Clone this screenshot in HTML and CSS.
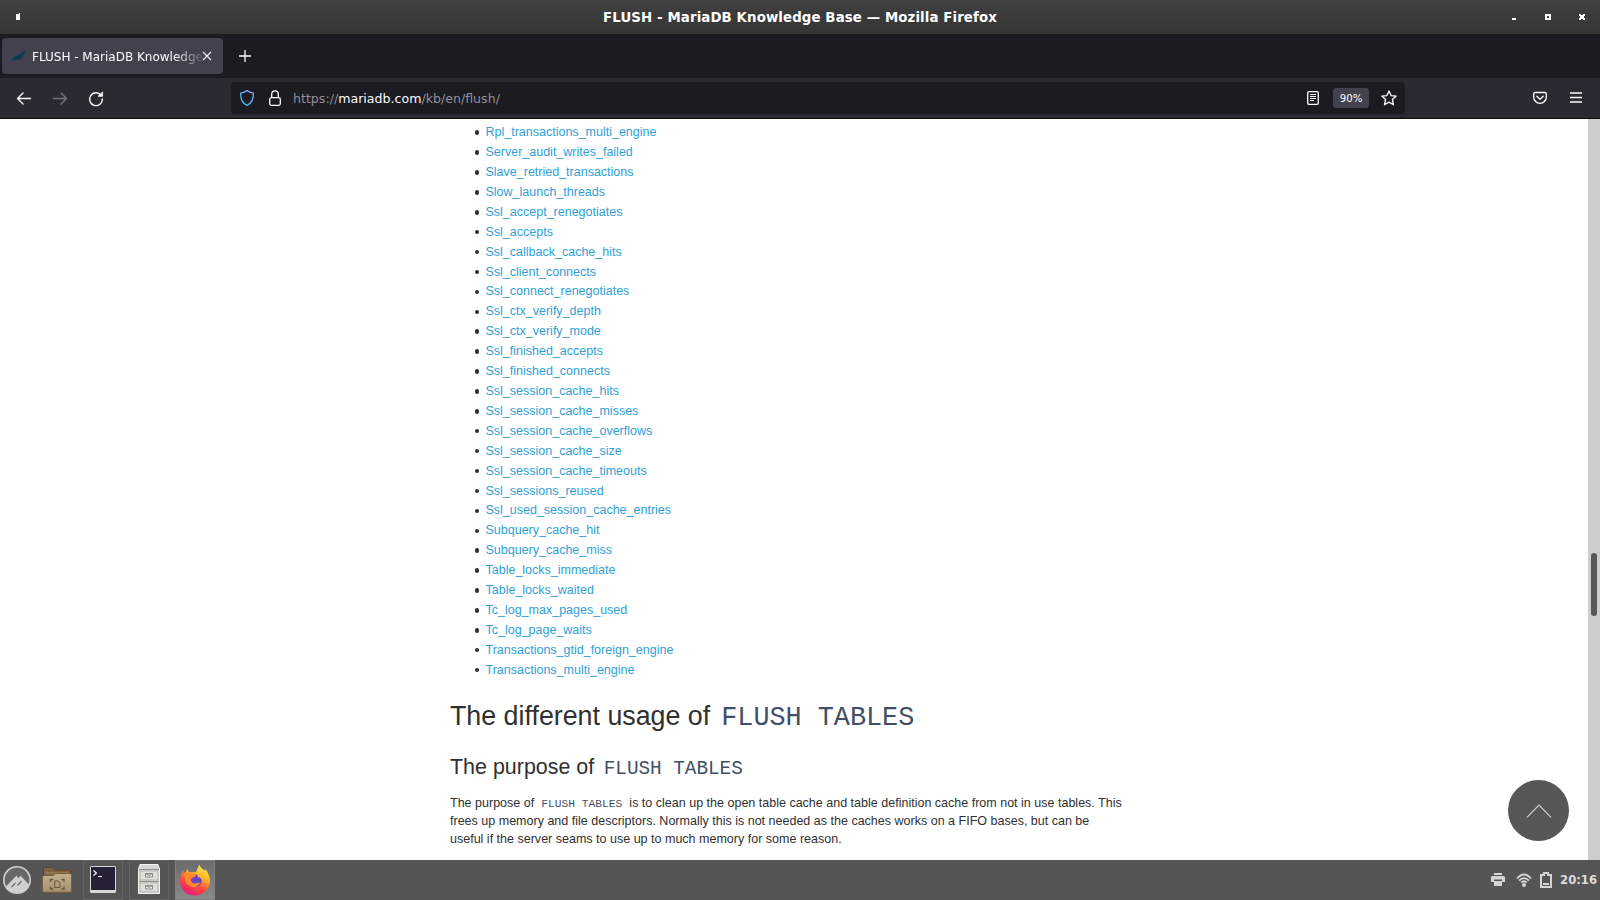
FILE: index.html
```html
<!DOCTYPE html>
<html lang="en">
<head>
<meta charset="utf-8">
<title>FLUSH - MariaDB Knowledge Base</title>
<link rel="stylesheet" href="styles.css">
</head>
<body>
<div class="screen">
  <header class="titlebar">
    <svg class="pin" width="4" height="7"><path d="M0 1H3V0H4V7H0Z" fill="#fff"/></svg>
    <div class="title">FLUSH - MariaDB Knowledge Base — Mozilla Firefox</div>
    <svg class="winbtns" width="74" height="8" fill="#fff" shape-rendering="crispEdges">
      <rect x="0" y="5" width="4" height="2"/>
      <path fill-rule="evenodd" d="M33 1h6v6h-6zM35 3v2h2v-2z"/>
      <path d="M67 1h2v1h2V1h2v2h-1v2h1v2h-2V6h-2v1h-2V5h1V3h-1z"/>
    </svg>
  </header>
  <div class="tabs">
    <div class="tab">
      <svg class="favicon" width="16" height="16" viewBox="0 0 16 16"><path d="M.3 12.300C2 12 2.600 11 4 9.500 5.500 8 7.500 7.500 9.500 6.800 12 5.500 12 3.300 15.600 2.500 15.500 4 14 4.500 13.600 6.500 13 9 11.500 10 9.800 10.800L10.700 12.500 8.300 11.300C6 11.500 5.500 12.800 4 13L4.300 11.600C3 12.500 1.500 12.800.3 12.300Z" fill="#053a52"/></svg>
      <span class="tab-label">FLUSH - MariaDB Knowledge</span>
      <svg class="tab-close" width="10" height="10"><path d="M1 1L9 9M9 1L1 9" stroke="#f1f1f4" stroke-width="1.100"/></svg>
    </div>
    <svg class="plus" width="12" height="12"><path d="M6 0V12M0 6H12" stroke="#fbfbfe" stroke-width="1.300"/></svg>
  </div>
  <nav class="toolbar">
    <svg class="nav-icons" width="110" height="40" fill="none" stroke="#fbfbfe" stroke-width="1.400" stroke-linecap="round" stroke-linejoin="round">
      <path d="M30.500 20.500H17.500M23 15L17.500 20.500L23 26"/>
      <path stroke="#75747c" d="M53.500 20.500H66.500M61 15L66.500 20.500L61 26"/>
      <path d="M101 17.200A6.400 6.400 0 1 0 102.400 21"/>
      <path fill="#fbfbfe" stroke-width=".8" d="M102.600 14.300V18.300H98.400Z"/>
    </svg>
    <div class="urlbar">
      <svg class="shield" width="16" height="18" viewBox="0 0 16 18"><defs><linearGradient id="g" x1="0" y1="1" x2="1" y2="0"><stop offset=".2" stop-color="#2cc5f8"/><stop offset="1" stop-color="#b79bf5"/></linearGradient></defs><path d="M8 1.600C6.500 2.900 4.200 3.800 1.700 4.200C1.300 9.500 3 13.900 8 16.400C13 13.900 14.700 9.500 14.300 4.200C11.800 3.800 9.500 2.900 8 1.600Z" fill="none" stroke="url(#g)" stroke-width="1.300"/></svg>
      <svg class="lock" width="12" height="16" fill="none" stroke="#fbfbfe" stroke-width="1.300"><path d="M2.700 8V4.200a3.300 3.300 0 0 1 6.600 0V8"/><rect x=".7" y="7.700" width="10.600" height="7.600" rx="1.500"/></svg>
      <span class="url">https://<b>mariadb.com</b>/kb/en/flush/</span>
      <svg class="reader" width="12" height="14" fill="none" stroke="#fbfbfe"><rect x=".7" y=".7" width="10.600" height="12.600" rx="1.300" stroke-width="1.300"/><path d="M3 3.500H9M3 5.500H9M3 7.500H9M3 9.500H7"/></svg>
      <span class="zoom">90%</span>
      <svg class="star" width="16" height="16" viewBox="0 0 16 16"><path d="M8 1L10.100 5.600L15.200 6.100L11.400 9.500L12.500 14.800L8 12.100L3.500 14.800L4.600 9.500L.8 6.100L5.900 5.600Z" fill="none" stroke="#fbfbfe" stroke-width="1.300" stroke-linejoin="round"/></svg>
    </div>
    <svg class="menu-icons" width="50" height="14" fill="none" stroke="#fbfbfe" stroke-width="1.300"><path d="M2 1.500H12A1.300 1.300 0 0 1 13.300 2.800V6A6.300 6.300 0 0 1 .7 6V2.800A1.300 1.300 0 0 1 2 1.500ZM3.800 5.200L7 8.200L10.200 5.200" stroke-linejoin="round" stroke-linecap="round"/><path d="M37 2H49M37 6.500H49M37 11H49" stroke-width="1.300"/></svg>
  </nav>
  <main class="page">
    <article class="content">
      <ul class="vars">
        <li><a>Rpl_transactions_multi_engine</a></li>
        <li><a>Server_audit_writes_failed</a></li>
        <li><a>Slave_retried_transactions</a></li>
        <li><a>Slow_launch_threads</a></li>
        <li><a>Ssl_accept_renegotiates</a></li>
        <li><a>Ssl_accepts</a></li>
        <li><a>Ssl_callback_cache_hits</a></li>
        <li><a>Ssl_client_connects</a></li>
        <li><a>Ssl_connect_renegotiates</a></li>
        <li><a>Ssl_ctx_verify_depth</a></li>
        <li><a>Ssl_ctx_verify_mode</a></li>
        <li><a>Ssl_finished_accepts</a></li>
        <li><a>Ssl_finished_connects</a></li>
        <li><a>Ssl_session_cache_hits</a></li>
        <li><a>Ssl_session_cache_misses</a></li>
        <li><a>Ssl_session_cache_overflows</a></li>
        <li><a>Ssl_session_cache_size</a></li>
        <li><a>Ssl_session_cache_timeouts</a></li>
        <li><a>Ssl_sessions_reused</a></li>
        <li><a>Ssl_used_session_cache_entries</a></li>
        <li><a>Subquery_cache_hit</a></li>
        <li><a>Subquery_cache_miss</a></li>
        <li><a>Table_locks_immediate</a></li>
        <li><a>Table_locks_waited</a></li>
        <li><a>Tc_log_max_pages_used</a></li>
        <li><a>Tc_log_page_waits</a></li>
        <li><a>Transactions_gtid_foreign_engine</a></li>
        <li><a>Transactions_multi_engine</a></li>
      </ul>
      <h2>The different usage of <code>FLUSH TABLES</code></h2>
      <h3>The purpose of <code>FLUSH TABLES</code></h3>
      <p>The purpose of <code>FLUSH TABLES</code> is to clean up the open table cache and table definition cache from not in use tables. This<br>frees up memory and file descriptors. Normally this is not needed as the caches works on a FIFO bases, but can be<br>useful if the server seams to use up to much memory for some reason.</p>
    </article>
    <div class="scrollbar"><div class="thumb"></div></div>
    <div class="to-top"><svg width="26" height="14"><path d="M1 13.300L13 1L25 13.300" fill="none" stroke="#d5d5d5" stroke-width="1.100"/></svg></div>
  </main>
  <footer class="taskbar">
    <svg class="launch" width="28" height="28" viewBox="0 0 28 28"><circle cx="14" cy="14" r="13.200" fill="#686868" stroke="#d0d0d0" stroke-width="1.600"/><path d="M3 20.500L13.500 9.500L15.300 12.200L17.500 9.800L26.500 19A13.500 13.500 0 0 1 3 21Z" fill="#d0d0d0"/><path d="M8.500 21L12.500 16.800M14.500 19.500L18.500 15" stroke="#686868" stroke-width="1.200"/></svg>
    <svg class="folder" width="30" height="26" viewBox="0 0 30 26"><defs><linearGradient id="f" x2="0" y2="1"><stop stop-color="#c2b08e"/><stop offset="1" stop-color="#a3906f"/></linearGradient></defs><path d="M1.500 10V1.500Q1.500.5 2.500.5H10L12.500 3H27.500Q28.500 3 28.500 4V10Z" fill="#7d6344" stroke="#5f4528"/><path d="M3 6H27" stroke="#a48b66"/><path d="M.5 10Q.5 8.500 2 8.500H11L13.500 6.500H28Q29.500 6.500 29.500 8V24Q29.500 25.300 28 25.300H2Q.5 25.300 .5 24Z" fill="url(#f)" stroke="#7a5c36"/><path d="M8.500 15V12.500H11M19.500 12.500H22V15M22 19.500V22H19.500M11 22H8.500V19.500" fill="none" stroke="#6b553a" stroke-width="1.300"/><path d="M12.700 14H16L18 16V20.500H12.700Z" fill="none" stroke="#6b553a"/></svg>
    <div class="task terminal"><svg width="26" height="27"><rect width="26" height="27" rx="1.500" fill="#d8d8d4"/><rect x="1" y="1" width="24" height="23" fill="#272137"/><path d="M3.500 4.500L6.500 7L3.500 9.500M8 10.500H12" fill="none" stroke="#fff" stroke-width="1.100"/></svg></div>
    <div class="task"><svg width="24" height="31" viewBox="0 0 24 31"><path d="M3 .5H21L22.500 5V29.500H1.500V5Z" fill="#d8d8d4" stroke="#f4f4f0"/><path d="M2 5.500H22M2 17.500H22" stroke="#8e8e8a"/><rect x="3" y="7" width="18" height="9" fill="#dededa" stroke="#b4b4b0"/><rect x="3" y="19" width="18" height="9" fill="#dededa" stroke="#b4b4b0"/><path d="M8.500 9.500H15.500V13H8.500ZM8.500 9.500L12 11.500L15.500 9.500M8.500 21.500H15.500V25H8.500ZM8.500 21.500L12 23.500L15.500 21.500" fill="#eee" stroke="#888"/></svg></div>
    <div class="task active"><svg width="32" height="32" viewBox="0 0 32 32"><defs><linearGradient id="x" x1=".8" y1="0" x2=".3" y2="1"><stop stop-color="#fff04c"/><stop offset=".35" stop-color="#ffb52b"/><stop offset=".65" stop-color="#ff4c3a"/><stop offset="1" stop-color="#e5177d"/></linearGradient></defs><path d="M20.500.5C20.500 3 23.500 4.500 25.500 7L26 5C29 8 31 12.500 31 17C31 25 24.500 31.500 16 31.500C7.500 31.500 1 25.500 1 17C1 12 3 9 4.500 6.500V10C5.500 8.500 6.500 8 7 8L8 4.500L10 8C13 7.500 14.500 9 17 8C18.500 6 18.500 3 20.500.5Z" fill="url(#x)"/><circle cx="16.500" cy="16.500" r="6.300" fill="#6846c4"/><path d="M18 9.500Q24 11 24 17Q22.500 13.500 19 13Z" fill="#ffb82d"/><path d="M5.500 10Q9 7 13 10.500H17Q17.500 12.800 13.500 13.500Q11.500 14.500 12 17Q13.500 21 19 18.500L21 19Q18 24 13 23Q5 20.500 5.500 10Z" fill="#ff8a2b"/></svg></div>
    <div class="tray">
      <svg class="tray-icons" width="62" height="18"><g fill="#d5d5d5"><path d="M3 2H11V4H3ZM1.500 5H12.500Q14 5 14 6.500V11H11V8.500H3V11H0V6.500Q0 5 1.500 5ZM3 10H11V15H3Z"/><circle cx="33" cy="14" r="2"/></g><g fill="none" stroke="#d5d5d5" stroke-width="1.800"><path d="M26 7.500Q33 -.5 40 7.500M28 9.700Q33 4.500 38 9.700M30.200 11.500Q33 9 35.800 11.500"/><path stroke-width="2" d="M53 4V2H57V4H60V16H50V4Z"/><path stroke-width="2" d="M52 13H58"/></g></svg>
      <span class="clock">20:16</span>
    </div>
  </footer>
</div>
</body>
</html>
```
FILE: styles.css
```css
* { box-sizing: border-box; }
body { margin: 0; background: #fff; }
svg { display: block; flex: none; }
.screen { width: 1600px; height: 900px; display: flex; flex-direction: column; overflow: hidden; font-family: "DejaVu Sans", sans-serif; }
.titlebar { height: 34px; flex: none; background: linear-gradient(#404040, #353535); display: grid; grid-template-columns: 100px 1fr 100px; align-items: center; }
.pin { margin: 0 0 1px 16px; }
.title { color: #fff; font-weight: bold; font-size: 13.33px; letter-spacing: .11px; text-align: center; white-space: nowrap; }
.winbtns { margin-left: 12px; }
.tabs { height: 44px; flex: none; background: #1c1b22; display: flex; align-items: center; padding-left: 2px; }
.tab { width: 221px; height: 36px; border-radius: 4px; background: #42414d; display: flex; align-items: center; padding-left: 8px; }
.tab-label { width: 171px; flex: none; margin: 1px 0 0 6px; white-space: nowrap; color: #fbfbfe; font-size: 12px; -webkit-mask-image: linear-gradient(90deg, #000 142px, transparent 174px); mask-image: linear-gradient(90deg, #000 142px, transparent 174px); }
.tab-close { margin-left: -1px; }
.plus { margin-left: 16px; }
.toolbar { height: 41px; flex: none; background: #2b2a33; border-bottom: 1px solid #0c0c0d; display: flex; align-items: center; }
.nav-icons { margin-right: 121px; }
.urlbar { width: 1174px; height: 32px; border-radius: 4px; background: #1c1b22; display: flex; align-items: center; padding-left: 8px; }
.lock { margin-left: 14px; }
.url { flex: 1; margin-left: 12px; font-size: 12.6px; color: #8f8f98; white-space: nowrap; }
.url b { font-weight: normal; color: #fbfbfe; }
.zoom { width: 36px; height: 20px; margin: 0 12px 0 14px; border-radius: 3px; background: #42414d; color: #fbfbfe; font-size: 10.2px; line-height: 21px; text-align: center; }
.star { margin-right: 8px; }
.menu-icons { margin-left: 128px; }
.page { flex: 1; min-height: 0; position: relative; display: flex; justify-content: space-between; background: #fff; overflow: hidden; }
.content { padding-left: 450px; color: #303030; font: 12.52px/18px "Liberation Sans", Arial, sans-serif; white-space: nowrap; }
.vars { margin: 4.2px 0 0; padding-left: 24.5px; list-style: none; font-size: 12.5px; }
.vars li { height: 19.91px; line-height: 19.91px; display: flex; align-items: center; gap: 6.5px; }
.vars li::before { content: ""; width: 4.5px; height: 4.5px; margin-top: -1px; border-radius: 50%; background: #303030; }
.vars a { color: #2f9fd8; }
code { font-family: "Liberation Mono", monospace; font-size: 90%; line-height: 0; color: #3f5066; padding: 0 3.6px; }
h2, h3 { font-weight: normal; margin: 0; }
h2 { font-size: 26.8px; line-height: 30px; margin-top: 20.4px; }
h2 code { font-size: 26.8px; }
h3 { font-size: 21.45px; line-height: 24px; margin-top: 24px; }
p { margin: 15px 0 0; }
.scrollbar { width: 12px; background: #cdcdcd; }
.thumb { width: 6px; height: 63px; margin: 434px 0 0 3px; border-radius: 3px; background: #555a58; }
.to-top { position: absolute; right: 31px; bottom: 19px; width: 61px; height: 61px; border-radius: 50%; background: #575757; display: flex; align-items: center; justify-content: center; }
.taskbar { height: 40px; flex: none; background: #555; display: flex; align-items: center; }
.launch { margin-left: 3px; }
.folder { margin: 0 11px; }
.task { width: 40px; height: 40px; margin-right: 6px; border: 1px solid #636363; display: flex; align-items: center; justify-content: center; padding-bottom: 1px; }
.active { border-color: #808080; background: linear-gradient(#6b6b6b, #8a8a8a); }
.tray { margin-left: auto; display: flex; align-items: center; padding-right: 3px; }
.tray-icons { margin-right: 7px; }
.clock { color: #dcdcdc; font-size: 11.6px; font-weight: bold; }
```
